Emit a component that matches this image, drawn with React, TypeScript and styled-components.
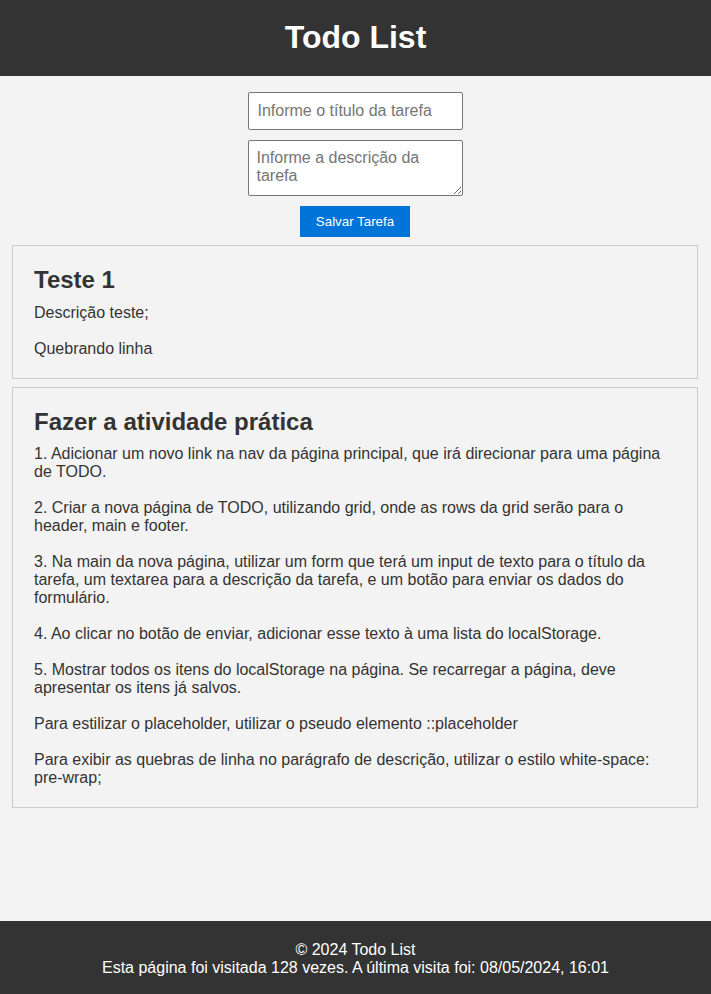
import React from "react";
import styled, { createGlobalStyle } from "styled-components";

const GlobalStyle = createGlobalStyle`
  html, body { margin: 0; padding: 0; }
  body {
    font-family: "Liberation Sans", Arial, sans-serif;
    background: #f3f3f3;
    color: #333;
  }
  * { box-sizing: border-box; }
`;

const Page = styled.div`
  display: grid;
  grid-template-rows: auto 1fr auto;
  min-height: 100vh;
`;

const Header = styled.header`
  background: #333;
  color: #fff;
  padding: 19px 0 21px;
  text-align: center;
`;

const Title = styled.h1`
  margin: 0;
  font-size: 32px;
  line-height: 36px;
  font-weight: bold;
`;

const Main = styled.main`
  padding: 16px 13px 16px 12px;
  display: flex;
  flex-direction: column;
  gap: 8px;
`;

const Form = styled.form`
  display: flex;
  flex-direction: column;
  align-items: center;
  gap: 10px;
`;

const fieldBase = `
  width: 215px;
  font-family: "Liberation Sans", Arial, sans-serif;
  font-size: 16px;
  color: #333;
  background: #fff;
  border: 1px solid #767676;
  border-radius: 2px;
  &::placeholder { color: #757575; }
`;

const TitleInput = styled.input`
  ${fieldBase}
  height: 38px;
  padding: 0 9px;
`;

const DescInput = styled.textarea`
  ${fieldBase}
  height: 56px;
  padding: 8px;
  line-height: 18px;
  resize: vertical;
  display: block;
`;

const SaveButton = styled.button`
  background: #0074d9;
  color: #fff;
  border: none;
  font-family: "Liberation Sans", Arial, sans-serif;
  font-size: 13.33px;
  line-height: 15px;
  padding: 8px 16px;
  cursor: pointer;
`;

const Card = styled.article`
  border: 1px solid #ccc;
  padding: 20px 20px 20px 21px;
`;

const CardTitle = styled.h2`
  margin: 0 0 10px;
  font-size: 24px;
  line-height: 27.6px;
  font-weight: bold;
  color: #333;
`;

const CardText = styled.p`
  margin: 0;
  font-size: 16px;
  line-height: 18px;
  white-space: pre-wrap;
  color: #333;
`;

const Footer = styled.footer`
  background: #333;
  color: #fff;
  text-align: center;
  padding: 20px 0 17px;
  font-size: 16px;
  line-height: 18px;
`;

const FooterLine = styled.div``;

const tasks = [
  { title: "Teste 1", desc: "Descrição teste;\n\nQuebrando linha" },
  {
    title: "Fazer a atividade prática",
    desc:
      "1. Adicionar um novo link na nav da página principal, que irá direcionar para uma página de TODO.\n\n" +
      "2. Criar a nova página de TODO, utilizando grid, onde as rows da grid serão para o header, main e footer.\n\n" +
      "3. Na main da nova página, utilizar um form que terá um input de texto para o título da tarefa, um textarea para a descrição da tarefa, e um botão para enviar os dados do formulário.\n\n" +
      "4. Ao clicar no botão de enviar, adicionar esse texto à uma lista do localStorage.\n\n" +
      "5. Mostrar todos os itens do localStorage na página. Se recarregar a página, deve apresentar os itens já salvos.\n\n" +
      "Para estilizar o placeholder, utilizar o pseudo elemento ::placeholder\n\n" +
      "Para exibir as quebras de linha no parágrafo de descrição, utilizar o estilo white-space: pre-wrap;",
  },
];

export default function App() {
  return (
    <>
      <GlobalStyle />
      <Page>
        <Header>
          <Title>Todo List</Title>
        </Header>
        <Main>
          <Form onSubmit={(e) => e.preventDefault()}>
            <TitleInput type="text" placeholder="Informe o título da tarefa" />
            <DescInput placeholder="Informe a descrição da tarefa" />
            <SaveButton type="submit">Salvar Tarefa</SaveButton>
          </Form>
          {tasks.map((t) => (
            <Card key={t.title}>
              <CardTitle>{t.title}</CardTitle>
              <CardText>{t.desc}</CardText>
            </Card>
          ))}
        </Main>
        <Footer>
          <FooterLine>© 2024 Todo List</FooterLine>
          <FooterLine>Esta página foi visitada 128 vezes. A última visita foi: 08/05/2024, 16:01</FooterLine>
        </Footer>
      </Page>
    </>
  );
}
